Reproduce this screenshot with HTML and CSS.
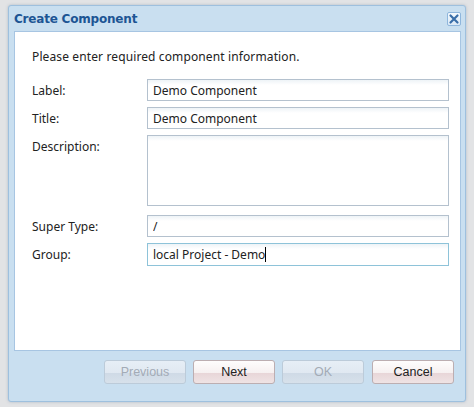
FILE: index.html
```html
<!DOCTYPE html>
<html>
<head>
<meta charset="utf-8">
<link rel="stylesheet" href="styles.css">
</head>
<body>
<div class="desk">
  <div class="window">
    <div class="header">
      <span class="title">Create Component</span>
      <span class="close"><svg width="12" height="12" viewBox="0 0 12 12"><path d="M2.5 2.5 L9.5 9.5 M9.5 2.5 L2.5 9.5" stroke="#3a6ea8" stroke-width="2.2" stroke-linecap="round"/></svg></span>
    </div>
    <div class="panel">
      <p class="intro">Please enter required component information.</p>
      <div class="form">
        <div class="row"><label class="lbl">Label:</label><input class="field" value="Demo Component"></div>
        <div class="row"><label class="lbl">Title:</label><input class="field" value="Demo Component"></div>
        <div class="row"><label class="lbl">Description:</label><textarea class="field area"></textarea></div>
        <div class="row gap"><label class="lbl">Super Type:</label><input class="field" value="/"></div>
        <div class="row"><label class="lbl">Group:</label><div class="field focused">local Project - Demo<span class="caret"></span></div></div>
      </div>
    </div>
    <div class="footer">
      <button class="btn disabled">Previous</button>
      <button class="btn">Next</button>
      <button class="btn disabled">OK</button>
      <button class="btn">Cancel</button>
    </div>
  </div>
</div>
</body>
</html>
```
FILE: styles.css
```css
html, body {
  margin: 0;
  padding: 0;
  width: 474px;
  height: 407px;
  overflow: hidden;
  background: #e2e3e5;
}
.desk {
  padding: 5px 8px 5px 8px;
  height: 407px;
  box-sizing: border-box;
}
.window {
  width: 458px;
  height: 397px;
  box-sizing: border-box;
  border: 1px solid #9ec0de;
  border-radius: 3px;
  background: #c9dff0;
  display: flex;
  flex-direction: column;
  box-shadow: 0 0 3px rgba(80, 110, 140, 0.35);
}
.header {
  height: 25px;
  display: flex;
  align-items: center;
  justify-content: space-between;
  padding: 0 4px 0 5px;
}
.title {
  font-family: "DejaVu Sans", "Liberation Sans", sans-serif;
  font-weight: bold;
  font-size: 12px;
  color: #1d5594;
  letter-spacing: -0.2px;
}
.close {
  width: 14px;
  height: 14px;
  box-sizing: border-box;
  border: 1px solid #8fb6dc;
  border-radius: 2px;
  background: linear-gradient(#f4f9fd, #dbe9f6);
  display: flex;
  align-items: center;
  justify-content: center;
  margin-top: 1px;
}
.panel {
  margin: 0 4px 0 5px;
  height: 320px;
  box-sizing: border-box;
  background: #ffffff;
  border: 1px solid #a7c5e2;
  padding: 0 11px 0 17px;
  font-family: "Noto Sans", "Open Sans", sans-serif;
  font-size: 12px;
  color: #222;
}
.intro {
  margin: 0;
  padding-top: 17px;
  height: 30px;
  line-height: 16px;
  letter-spacing: 0.12px;
}
.form {
  display: flex;
  flex-direction: column;
  gap: 6px;
}
.row {
  display: flex;
  align-items: flex-start;
}
.row.gap {
  margin-top: 3px;
}
.lbl {
  width: 115px;
  flex: none;
  padding-top: 3px;
  line-height: 18px;
}
.field {
  width: 302px;
  height: 22px;
  box-sizing: border-box;
  border: 1px solid #b4c1ce;
  background: linear-gradient(#eef3f7 0px, #ffffff 5px);
  font-family: "Noto Sans", "Open Sans", sans-serif;
  font-size: 12px;
  color: #222;
  padding: 0 5px;
  margin: 0;
  outline: none;
  line-height: 20px;
}
.area {
  height: 71px;
  resize: none;
  display: block;
}
.focused {
  border-color: #8ec3d9;
  display: flex;
  align-items: center;
  height: 23px;
}
.caret {
  display: inline-block;
  width: 1px;
  height: 15px;
  background: #000;
}
.footer {
  flex: 1;
  display: flex;
  justify-content: flex-end;
  align-items: flex-start;
  gap: 7px;
  padding: 9px 11px 0 0;
}
.btn {
  width: 82px;
  height: 24px;
  box-sizing: border-box;
  border: 1px solid #bcaeb1;
  border-radius: 3px;
  background: linear-gradient(#fefdfd 0%, #f6f0f0 55%, #e8d6d8 56%, #efe3e4 100%);
  font-family: "Liberation Sans", Arial, sans-serif;
  font-size: 12.5px;
  color: #222;
  padding: 0;
}
.btn:last-child {
  margin-left: 1px;
}
.btn.disabled {
  border-color: #bccbd9;
  background: linear-gradient(#e6eef6 0%, #e0e8f1 55%, #cfdae6 56%, #d7e1eb 100%);
  color: #a3abb6;
}
```
